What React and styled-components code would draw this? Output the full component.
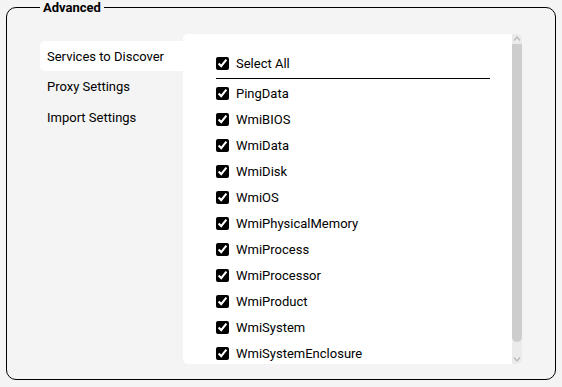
import React from "react";
import styled, { createGlobalStyle } from "styled-components";

const Global = createGlobalStyle`
  html, body { margin: 0; padding: 0; background: #f4f4f4; }
  body { font-family: Roboto, "Liberation Sans", sans-serif; font-size: 13px; color: #000; }
`;

const Page = styled.div`
  padding: 0 6px 5px 6px;
`;

const Fieldset = styled.fieldset`
  margin: 0;
  padding: 19px 33px 15px 33px;
  border: 1px solid #000;
  border-radius: 10px;
  min-width: 0;
`;

const Legend = styled.legend`
  margin-left: 0;
  padding: 0 3px;
  font-weight: 700;
  font-size: 13px;
  line-height: 15px;
`;

const Body = styled.div`
  display: flex;
  align-items: flex-start;
`;

const Nav = styled.div`
  width: 143px;
  padding-top: 7px;
  display: flex;
  flex-direction: column;
`;

const Tab = styled.div`
  height: 30px;
  padding-left: 7px;
  display: flex;
  align-items: center;
  border-radius: 5px 0 0 5px;
  background: ${(p) => (p.$active ? "#fff" : "transparent")};
  cursor: pointer;
  margin-bottom: ${(p) => (p.$last ? 0 : "0.5px")};
`;

const Panel = styled.div`
  width: 339px;
  height: 330px;
  background: #fff;
  border-radius: 5px;
  overflow: hidden;
  display: flex;
`;

const Scroller = styled.div`
  flex: 1;
  overflow: hidden;
`;

const List = styled.div`
  padding: 16px 22px 11px 33px;
`;

const Row = styled.label`
  height: 26px;
  display: flex;
  align-items: center;
  gap: 7px;
`;

const Check = styled.input`
  width: 13px;
  height: 13px;
  margin: 0;
  accent-color: #000;
`;

const Divider = styled.div`
  height: 1px;
  background: #000;
  margin: 2px 0 1px 0;
`;

const ScrollBar = styled.div`
  width: 10px;
  display: flex;
  flex-direction: column;
  background: #ebebeb;
`;

const ScrollButton = styled.div`
  height: 10px;
  display: flex;
  align-items: center;
  justify-content: center;
`;

const Track = styled.div`
  flex: 1;
  display: flex;
  flex-direction: column;
`;

const Thumb = styled.div`
  height: ${(p) => p.$size}px;
  background: #cdcdcd;
  border-radius: 0 0 5px 5px;
`;

const Chevron = ({ dir }) => (
  <svg width="10" height="10" viewBox="0 0 10 10">
    <path
      d={dir === "up" ? "M2 6.5 L5 3 L8 6.5" : "M2 3.5 L5 7 L8 3.5"}
      fill="none"
      stroke="#b9b9b9"
      strokeWidth="1.2"
    />
  </svg>
);

const items = [
  "PingData",
  "WmiBIOS",
  "WmiData",
  "WmiDisk",
  "WmiOS",
  "WmiPhysicalMemory",
  "WmiProcess",
  "WmiProcessor",
  "WmiProduct",
  "WmiSystem",
  "WmiSystemEnclosure",
];

export default function App() {
  return (
    <Page>
      <Global />
      <Fieldset>
        <Legend>Advanced</Legend>
        <Body>
          <Nav>
            <Tab $active>Services to Discover</Tab>
            <Tab>Proxy Settings</Tab>
            <Tab $last>Import Settings</Tab>
          </Nav>
          <Panel>
            <Scroller>
              <List>
                <Row>
                  <Check type="checkbox" defaultChecked />
                  Select All
                </Row>
                <Divider />
                {items.map((it) => (
                  <Row key={it}>
                    <Check type="checkbox" defaultChecked />
                    {it}
                  </Row>
                ))}
              </List>
            </Scroller>
            <ScrollBar>
              <ScrollButton>
                <Chevron dir="up" />
              </ScrollButton>
              <Track>
                <Thumb $size={298} />
              </Track>
              <ScrollButton>
                <Chevron dir="down" />
              </ScrollButton>
            </ScrollBar>
          </Panel>
        </Body>
      </Fieldset>
    </Page>
  );
}
